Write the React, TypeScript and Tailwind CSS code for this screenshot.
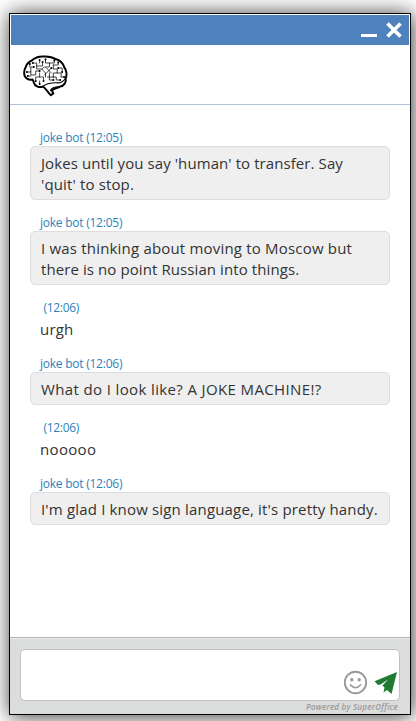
import React from "react";

type Message = {
  author?: string;
  time: string;
  lines: { text: string; tracking: string }[];
};

const messages: Message[] = [
  {
    author: "joke bot",
    time: "12:05",
    lines: [
      { text: "Jokes until you say 'human' to transfer. Say", tracking: "tracking-[0.08px]" },
      { text: "'quit' to stop.", tracking: "tracking-[0.14px]" },
    ],
  },
  {
    author: "joke bot",
    time: "12:05",
    lines: [
      { text: "I was thinking about moving to Moscow but", tracking: "tracking-[0.19px]" },
      { text: "there is no point Russian into things.", tracking: "tracking-[0.09px]" },
    ],
  },
  { time: "12:06", lines: [{ text: "urgh", tracking: "tracking-[0.2px]" }] },
  {
    author: "joke bot",
    time: "12:06",
    lines: [{ text: "What do I look like? A JOKE MACHINE!?", tracking: "tracking-[0.37px]" }],
  },
  { time: "12:06", lines: [{ text: "nooooo", tracking: "tracking-[0.33px]" }] },
  {
    author: "joke bot",
    time: "12:06",
    lines: [{ text: "I'm glad I know sign language, it's pretty handy.", tracking: "tracking-[0.17px]" }],
  },
];

function BrainLogo() {
  return (
    <svg width="45" height="42" viewBox="0 0 46 42" preserveAspectRatio="none" fill="none" stroke="#000" strokeLinecap="round" strokeLinejoin="round">
      <path
        strokeWidth="2"
        d="M1.300 19C.8 16 2 13.200 3 11.500C4 8.500 6.500 6.500 9 5.500C12 2.800 17 1.300 21 1.500C26 1.200 31 2.500 34 4.300C38 5.500 41 8.500 42 12C44.500 15 45.300 20 43.500 23.500C44.500 27 42 31 38 31.500C35.500 33.500 32 32.500 29.500 35.500L31 38.500L28.500 40.200C25.500 38 24 34 20.500 31.500C17 33 12 31.500 11 27.500C10.500 26 10.500 25 9.500 24.500C6 25.500 1.300 23 1.300 19Z"
      />
      <path strokeWidth="1.200" d="M20.500 31.500C24 28 30 27.500 36 27.800C39 28 41.500 26 43.500 23.500M28 35.500C29 33.500 32 32 37 31.700" />
      <path
        strokeWidth=".75"
        d="M4 17H8V12H11M7 9V12M8 17V20H13V16H17M5 21H8M10 8H14V11H20V7M14 11V14H19L23 18V22M17 5V8M23 4V8H27V12H22L19 14M17 18V22H13V26M17 22H21V26M24 13L29 18M29 13L22 20M27 8H32V5M31 10H36V7M31 10V14H35V18H31V23M36 13H40V17M35 18H39V22M27 18V25H31M39 22H42M25 22H34V25H38M17 26V29"
      />
      <g fill="#000" stroke="none">
        <circle cx="7" cy="9" r="1" /><circle cx="11" cy="12" r="1" />
        <circle cx="10" cy="8" r="1" /><circle cx="17" cy="5" r="1" />
        <circle cx="20" cy="7" r="1" /><circle cx="23" cy="4.500" r="1" />
        <circle cx="5" cy="21" r="1" /><circle cx="4" cy="17" r="1" />
        <circle cx="17" cy="16" r="1" /><circle cx="13" cy="26" r="1" />
        <circle cx="21" cy="26" r="1" /><circle cx="17" cy="29" r="1" />
        <circle cx="29" cy="13" r="1" /><circle cx="32" cy="5.500" r="1" />
        <circle cx="36" cy="7.500" r="1" /><circle cx="40" cy="17" r="1" />
        <circle cx="36" cy="13" r="1" /><circle cx="31" cy="25" r="1" />
        <circle cx="38" cy="25" r="1" /><circle cx="42" cy="22" r="1" />
      </g>
    </svg>
  );
}

function ChatMessage({ message }: { message: Message }) {
  return (
    <div className="mb-[15px]">
      <div
        className={
          message.author
            ? "h-4 whitespace-nowrap pl-2.5 text-[12px] leading-4 tracking-[-0.24px] text-[#2b83bd]"
            : "h-4 whitespace-nowrap pl-[13.5px] text-[12px] leading-4 tracking-[-0.3px] text-[#2b83bd]"
        }
      >
        <span>{message.author ? `${message.author} (${message.time})` : `(${message.time})`}</span>
      </div>
      <div
        className={
          message.author
            ? "rounded-[5px] border border-[#dddddd] bg-[#efefef] px-2.5 pb-1 pt-1.5"
            : "px-2.5 pb-px pt-[3px]"
        }
      >
        {message.lines.map((line) => (
          <div key={line.text} className="h-[21px] whitespace-nowrap text-[15px] leading-[21px] text-[#333333]">
            <span className={line.tracking}>{line.text}</span>
          </div>
        ))}
      </div>
    </div>
  );
}

export default function App() {
  return (
    <div className="h-[721px] w-[416px] overflow-hidden bg-white pl-[9px] pt-[13px] font-['Open_Sans',sans-serif]">
      <div className="flex h-[702px] w-[402px] flex-col border border-black bg-white shadow-[1px_1px_20px_rgba(0,0,0,0.8)]">
        <div className="mx-px mt-px flex h-[30px] shrink-0 justify-end bg-[#4f81bc]">
          <svg width="48" height="30" viewBox="0 0 48 30" fill="none" stroke="#fff">
            <path d="M0 20.500H16" strokeWidth="3" />
            <path d="M26.500 8.500L39.500 21.500M39.500 8.500L26.500 21.500" strokeWidth="3.700" />
          </svg>
        </div>
        <div className="h-[60px] shrink-0 border-b border-[#afc4da] pl-[13px] pt-[10px]">
          <BrainLogo />
        </div>
        <div className="flex-1 px-5 pt-[25px]">
          {messages.map((message, i) => (
            <ChatMessage key={i} message={message} />
          ))}
        </div>
        <div className="h-[77px] shrink-0 border-t border-[#b3b5b4] bg-[#dbdddc]">
          <div className="h-px bg-[#eceeed]" />
          <div className="mx-2.5 mt-[10px] flex h-[52px] items-end justify-end gap-[6px] rounded-[5px] border border-[#bfc1c0] bg-white pb-[5px] pr-px">
            <svg width="25" height="25" viewBox="0 0 25 25" fill="none" stroke="#999999">
              <circle cx="12.500" cy="12.500" r="10.700" strokeWidth="1.900" />
              <path d="M7.500 15Q12.500 20.500 17.500 15" strokeWidth="1.700" strokeLinecap="round" />
              <circle cx="8.800" cy="9.800" r="1.700" fill="#999" stroke="none" />
              <circle cx="16.200" cy="9.800" r="1.700" fill="#999" stroke="none" />
            </svg>
            <svg width="24" height="24" viewBox="0 0 24 24" fill="#217a33">
              <path d="M23 1L.5 10.200L4 14L7 13.200L14 8.500L8.500 14.500L10.500 16.500L9.500 21.500L13 19L17.500 23Z" />
            </svg>
          </div>
          <div className="flex h-[12px] justify-end pr-[12px] text-[8px] font-semibold italic leading-[12px] text-[#999b9a]">
            <span className="whitespace-nowrap tracking-[0.23px]">Powered by SuperOffice</span>
          </div>
        </div>
      </div>
    </div>
  );
}
